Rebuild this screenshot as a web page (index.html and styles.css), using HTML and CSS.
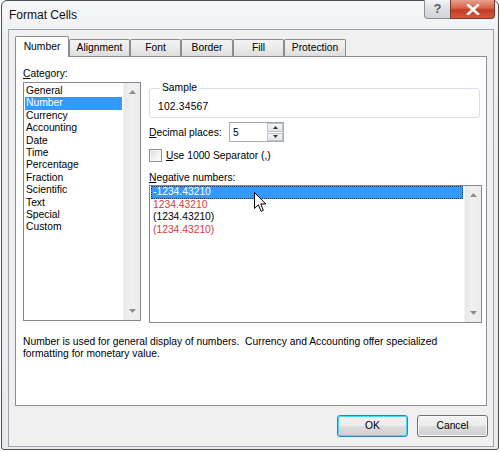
FILE: index.html
```html
<!DOCTYPE html>
<html>
<head>
<meta charset="utf-8">
<link rel="stylesheet" href="styles.css">
</head>
<body>
<div class="window">
  <div class="titlebar">
    <span class="title">Format Cells</span>
    <div class="caption">
      <div class="cap-help">?</div>
      <div class="cap-close">
        <svg width="14" height="11" viewBox="0 0 14 11"><path d="M2 1 L12 10 M12 1 L2 10" stroke="#fff" stroke-width="2.6" stroke-linecap="round"/></svg>
      </div>
    </div>
  </div>
  <div class="client">
    <div class="tabs">
      <div class="tab active w54">Number</div>
      <div class="tab w61">Alignment</div>
      <div class="tab w51">Font</div>
      <div class="tab w52">Border</div>
      <div class="tab w51">Fill</div>
      <div class="tab w62">Protection</div>
    </div>
    <div class="panel">
      <div class="cols">
        <div class="leftcol">
          <div class="label"><u>C</u>ategory:</div>
          <div class="listbox cat">
            <div class="items">
              <div class="item">General</div>
              <div class="item sel">Number</div>
              <div class="item">Currency</div>
              <div class="item">Accounting</div>
              <div class="item">Date</div>
              <div class="item">Time</div>
              <div class="item">Percentage</div>
              <div class="item">Fraction</div>
              <div class="item">Scientific</div>
              <div class="item">Text</div>
              <div class="item">Special</div>
              <div class="item">Custom</div>
            </div>
            <div class="vscroll">
              <svg class="arr" width="7" height="4" viewBox="0 0 7 4"><path d="M0 4 L3.5 0 L7 4 Z" fill="#8d8d8d"/></svg>
              <svg class="arr" width="7" height="4" viewBox="0 0 7 4"><path d="M0 0 L3.5 4 L7 0 Z" fill="#8d8d8d"/></svg>
            </div>
          </div>
        </div>
        <div class="rightcol">
          <fieldset class="sample">
            <legend>Sample</legend>
            <div class="sample-val">102.34567</div>
          </fieldset>
          <div class="dec-row">
            <span class="dec-label"><u>D</u>ecimal places:</span>
            <div class="spin">
              <span class="spin-val">5</span>
              <div class="spin-btns">
                <div class="spin-btn"><svg width="5" height="3" viewBox="0 0 5 3"><path d="M0 3 L2.5 0 L5 3 Z" fill="#333"/></svg></div>
                <div class="spin-btn"><svg width="5" height="3" viewBox="0 0 5 3"><path d="M0 0 L2.5 3 L5 0 Z" fill="#333"/></svg></div>
              </div>
            </div>
          </div>
          <div class="check-row">
            <span class="checkbox"></span>
            <span class="check-label"><u>U</u>se 1000 Separator (,)</span>
          </div>
          <div class="label neg-label"><u>N</u>egative numbers:</div>
          <div class="listbox neg">
            <div class="items">
              <div class="nitem sel focus">-1234.43210</div>
              <div class="nitem red">1234.43210</div>
              <div class="nitem">(1234.43210)</div>
              <div class="nitem red">(1234.43210)</div>
            </div>
            <div class="vscroll">
              <svg class="arr" width="7" height="4" viewBox="0 0 7 4"><path d="M0 4 L3.5 0 L7 4 Z" fill="#8d8d8d"/></svg>
              <svg class="arr" width="7" height="4" viewBox="0 0 7 4"><path d="M0 0 L3.5 4 L7 0 Z" fill="#8d8d8d"/></svg>
            </div>
          </div>
        </div>
      </div>
      <p class="desc">Number is used for general display of numbers.&nbsp; Currency and Accounting offer specialized formatting for monetary value.</p>
    </div>
    <div class="buttons">
      <div class="btn default">OK</div>
      <div class="btn">Cancel</div>
    </div>
  </div>
</div>
<svg class="cursor" width="13" height="21" viewBox="0 0 13 21">
  <path d="M0.5 0.5 L0.5 16.5 L4.3 12.8 L7 19.3 L9.3 18.3 L6.7 12 L11.8 12 Z" fill="#fff" stroke="#000" stroke-width="1" stroke-linejoin="miter"/>
</svg>
</body>
</html>
```

FILE: styles.css
```css
* { box-sizing: border-box; }

body {
  margin: 0;
  width: 500px;
  height: 452px;
  background: #ffffff;
  font-family: "Liberation Sans", Arial, sans-serif;
  font-size: 10.3px;
  color: #000;
  overflow: hidden;
  position: relative;
}

.window {
  margin-left: 1px;
  width: 498px;
  height: 450px;
  border: 1px solid #4a4d52;
  border-radius: 6px 6px 3px 3px;
  background: linear-gradient(#f7f8f9, #eceef1 40px, #e9ebee);
  display: flex;
  flex-direction: column;
}

.titlebar {
  height: 28px;
  display: flex;
  align-items: flex-start;
  flex-shrink: 0;
}

.title {
  margin: 7px 0 0 7px;
  font-size: 12px;
  line-height: 14px;
  color: #111;
}

.caption {
  margin-left: auto;
  margin-right: 3px;
  margin-top: -1px;
  display: flex;
}

.cap-help {
  width: 26px;
  height: 19px;
  border: 1px solid #8a8f97;
  border-right: none;
  border-top: none;
  border-radius: 0 0 0 4px;
  background: linear-gradient(#f2f3f5, #dcdfe3 50%, #cfd3d8);
  color: #5a6068;
  font-size: 13px;
  font-weight: bold;
  line-height: 18px;
  text-align: center;
}

.cap-close {
  width: 45px;
  height: 19px;
  border: 1px solid #7a3a30;
  border-top: none;
  border-radius: 0 0 4px 0;
  background: linear-gradient(#e8a190, #d6624b 45%, #c43b22 55%, #d5593f);
  display: flex;
  align-items: center;
  justify-content: center;
}

.client {
  margin: 0 4px 2px 6px;
  flex: 1;
  border: 1px solid #9ea3aa;
  background: #f0f0f0;
  padding: 6px 0 0 6px;
  display: flex;
  flex-direction: column;
}

.tabs {
  display: flex;
  height: 20px;
  align-items: flex-end;
  position: relative;
  z-index: 1;
}

.tab {
  height: 17px;
  border: 1px solid #898c95;
  border-bottom: none;
  border-radius: 2px 2px 0 0;
  background: linear-gradient(#f3f3f3, #ebebeb 50%, #dddddd);
  text-align: center;
  line-height: 16px;
}

.tab.active {
  height: 21px;
  margin-bottom: -1px;
  background: #ffffff;
  line-height: 19px;
}

.w54 { width: 54px; }
.w61 { width: 61px; }
.w51 { width: 51px; }
.w52 { width: 52px; }
.w62 { width: 62px; }

.panel {
  width: 472px;
  height: 350px;
  border: 1px solid #898c95;
  background: #ffffff;
  padding: 10px 0 0 7px;
}

.cols {
  display: flex;
  gap: 8px;
}

.leftcol { width: 118px; }

.label {
  height: 13px;
  line-height: 13px;
}

.listbox {
  border: 1px solid #828790;
  background: #fff;
  display: flex;
}

.cat {
  margin-top: 2px;
  height: 239px;
}

.items {
  flex: 1;
  padding: 2px 1px 0 1px;
}

.item {
  height: 12.4px;
  line-height: 12.4px;
  padding-left: 1px;
  white-space: nowrap;
}

.sel {
  background: #3399ff;
  color: #ffffff;
}

.vscroll {
  width: 17px;
  background: linear-gradient(90deg, #e6e6e6, #f0f0f0 40%, #ececec);
  border-left: 1px solid #f5f5f5;
  display: flex;
  flex-direction: column;
  justify-content: space-between;
  align-items: center;
  padding: 7px 0 7px 0;
}

.rightcol {
  width: 333px;
}

.sample {
  margin: 15px 0 0 0;
  width: 331px;
  padding: 0 0 4px 8px;
  border: 1px solid #d5dfe5;
  border-radius: 3px;
}

.sample legend {
  padding: 0 2px;
  margin-left: 2px;
  line-height: 12px;
}

.sample-val {
  margin-top: 7px;
  line-height: 12px;
  letter-spacing: 0.2px;
}

.dec-row {
  margin-top: 4px;
  height: 20px;
  display: flex;
  align-items: center;
}

.dec-label { width: 80px; }

.spin {
  width: 55px;
  height: 20px;
  border: 1px solid #abadb3;
  border-top-color: #9ea1a8;
  display: flex;
  align-items: center;
  background: #fff;
}

.spin-val {
  flex: 1;
  padding-left: 3px;
}

.spin-btns {
  width: 16px;
  height: 18px;
  display: flex;
  flex-direction: column;
  gap: 1px;
}

.spin-btn {
  flex: 1;
  border: 1px solid #b9c1cb;
  background: linear-gradient(#f5f7f9, #dfe5eb);
  display: flex;
  align-items: center;
  justify-content: center;
}

.check-row {
  margin-top: 7px;
  height: 13px;
  display: flex;
  align-items: center;
}

.checkbox {
  width: 13px;
  height: 13px;
  border: 1px solid #8e8f8f;
  background: linear-gradient(135deg, #d8d8d8, #f4f4f4 60%, #ffffff);
  box-shadow: inset 0 0 0 1px #f6f6f6;
}

.check-label {
  margin-left: 4px;
  line-height: 13px;
}

.neg-label { margin-top: 9px; }

.neg {
  margin-top: 1px;
  height: 138px;
}

.neg .items { padding: 0 1px 0 1px; }

.nitem {
  height: 12.5px;
  line-height: 12.5px;
  padding-left: 2px;
  white-space: nowrap;
}

.focus {
  outline: 1px dotted #1a3f6a;
  outline-offset: -1px;
}

.red { color: #d23c3c; }

.desc {
  margin: 13px 0 0 0;
  width: 440px;
  line-height: 12px;
}

.buttons {
  display: flex;
  justify-content: flex-end;
  gap: 9px;
  margin-top: 9px;
  padding-right: 5px;
}

.btn {
  width: 71px;
  height: 22px;
  border: 1px solid #707070;
  border-radius: 3px;
  background: linear-gradient(#f2f2f2, #ebebeb 50%, #dddddd 51%, #cfcfcf);
  text-align: center;
  line-height: 20px;
  box-shadow: inset 0 0 0 1px #fbfbfb;
}

.btn.default {
  border-color: #3c7fb1;
  box-shadow: inset 0 0 0 1px #48d8fb;
}

.cursor {
  position: absolute;
  left: 254px;
  top: 192px;
}
```
